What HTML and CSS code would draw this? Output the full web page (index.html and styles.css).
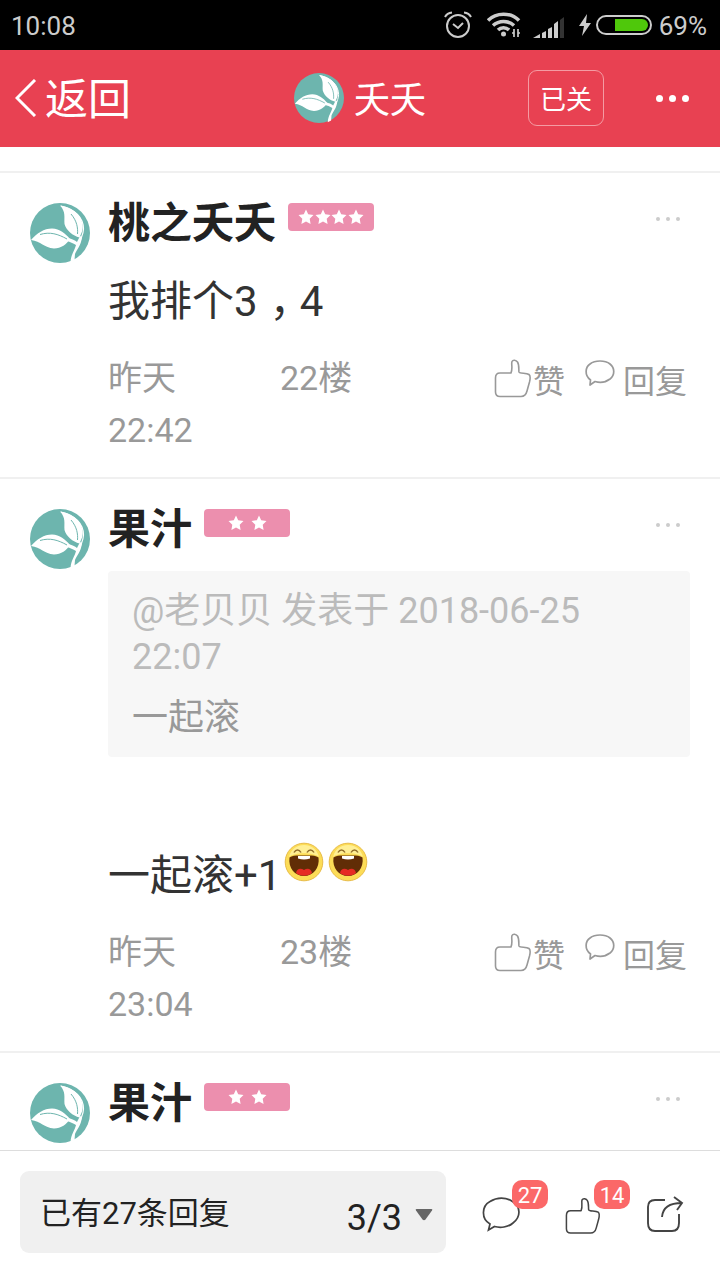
FILE: index.html
```html
<!DOCTYPE html>
<html lang="zh-CN">
<head>
<meta charset="utf-8">
<title>夭夭</title>
<link rel="stylesheet" href="styles.css">
</head>
<body>
<svg class="defs" aria-hidden="true">
  <symbol id="leaf" viewBox="0 0 60 60">
    <circle cx="30" cy="30" r="30" fill="#6db5ae"/>
    <g fill="#fff">
      <path d="M30 2.500C41 4 51 11 52.500 21C53.500 27 51 31 49.500 34.500C43 33 36 27 34.500 21C34 14 36 9 30 2.500Z"/>
      <path d="M1 37C7 30 14 25.500 22 25.500C30 26 35 30 40 36C37 41 31 45.500 24 45.500C14 45 11 38 1 37Z"/>
      <path d="M38 35C42 36 45 37 47 39C48 37 49 35 50 33L52 34C51 43 47 46 45 51L44.500 57L40.500 59C41 51 45 47 46 42C43 40 40 39 37 38Z"/>
    </g>
    <path d="M31 3C45 6 53.500 15 53.500 26C53.500 30 51.500 34 50.500 37" fill="none" stroke="#fff" stroke-width="1.200"/>
    <path d="M41 11C47 18 48 25 47.500 31M10 31.500C20 28.500 28 31 37 36" fill="none" stroke="#6db5ae" stroke-width="1"/>
  </symbol>
  <symbol id="thumb" viewBox="0 0 38 39">
    <path d="M17 14C19 9 17 5 18 2.500C19 .5 22 1 23.500 3C25.500 6 24.500 11 25 13C26 15 32 13.500 35 15.500C37 17 36 21 35.500 23L33 32C32 36 30 37.500 27 37.500H6C3 37.500 1.500 36 1.500 33V19C1.500 15 3 14 6 14Z" fill="none" stroke="currentColor" stroke-width="1.600" stroke-linejoin="round"/>
  </symbol>
  <symbol id="bubble" viewBox="0 0 30 27">
    <path d="M5.500 20C-1 15 .5 7 5 4C10 0 20 0 25 4C30 8 30 15 25 19C21 22 15 23 10 21.500L5 25Z" fill="none" stroke="currentColor" stroke-width="1.700" stroke-linejoin="round"/>
  </symbol>
  <symbol id="star" viewBox="0 0 16 16">
    <path d="M8 .5L10.200 5.200L15.500 6L11.700 9.700L12.600 15L8 12.500L3.400 15L4.300 9.700L.5 6L5.800 5.200Z" fill="#fff"/>
  </symbol>
  <symbol id="laugh" viewBox="0 0 40 40">
    <circle cx="20" cy="20" r="18.800" fill="#fcdc57" stroke="#e8bc48" stroke-width="1"/>
    <path d="M5 15C7 7 13 3 20 3S33 7 35 15C29 10 11 10 5 15Z" fill="#ffef94"/>
    <path d="M10 10.500C12 7 15 7 17 10.500M23 10.500C25 7 28 7 30 10.500" fill="none" stroke="#94702c" stroke-width="1.500"/>
    <path d="M5.500 15.500C9 13 14 13.500 20 13.500S31 13 34.500 15.500C36 26 29 34 20 34S4 26 5.500 15.500Z" fill="#612d06"/>
    <path d="M14 14H26V16.500Q20 18.500 14 16.500Z" fill="#fff"/>
    <path d="M12 31C13 26 17 26 20 28C23 26 27 26 28 31C24 34.500 16 34.500 12 31Z" fill="#e62a24"/>
  </symbol>
</svg>

<div class="screen">
  <div class="status">
    <span>10:08</span>
    <div class="status-icons">
      <svg width="28" height="28" viewBox="0 0 28 28" fill="none" stroke="#ccc" stroke-width="2"><circle cx="14" cy="15" r="11"/><path d="M9 13L14 17L19 12M1 6Q3 2 8 1.500M27 6Q25 2 20 1.500"/></svg>
      <svg class="wifi" width="34" height="26" viewBox="0 0 34 26" fill="none" stroke="#ccc" stroke-width="3.500"><path d="M1 8.500C9 0 24 0 32 8.500M6 13.500C12 8 21 8 27 13.500M11 18C14 15 19 15 22 18"/><circle cx="16.500" cy="22" r="2.500" fill="#ccc" stroke="none"/><path d="M27 17V25M31 17V25M25 21H27M31 21H33" stroke-width="1.700"/></svg>
      <svg class="signal" width="32" height="22" viewBox="0 0 32 22" fill="#ccc"><path d="M0 22L7 18V22ZM9 17L13 15V22H9ZM15 13L19 11V22H15ZM21 8L25 5V22H21Z"/><path d="M27 4L31 1V22H27Z" fill="#333"/></svg>
      <svg class="bolt" width="12" height="22" viewBox="0 0 12 22" fill="#ccc"><path d="M8 0L0 12H5L3 22L12 9H7Z"/></svg>
      <span class="battery"><i></i></span>
      <span>69%</span>
    </div>
  </div>

  <header class="topbar">
    <div class="back"><svg width="22" height="38" viewBox="0 0 22 38" fill="none" stroke="#fff" stroke-width="3"><path d="M20 1L2 19L20 37"/></svg><span>返回</span></div>
    <div class="title"><svg width="50" height="50"><use href="#leaf"/></svg><span>夭夭</span></div>
    <div class="follow">已关</div>
    <div class="menu"><i></i><i></i><i></i></div>
  </header>

  <main class="posts">
    <article class="post">
      <svg class="avatar"><use href="#leaf"/></svg>
      <div class="content">
        <div class="head"><b class="name">桃之夭夭</b><span class="level"><svg><use href="#star"/></svg><svg><use href="#star"/></svg><svg><use href="#star"/></svg><svg><use href="#star"/></svg></span><span class="more"><i></i><i></i><i></i></span></div>
        <p class="text">我排个3<span class="comma">，</span>4</p>
        <div class="meta"><span class="time">昨天 22:42</span><span class="floor">22楼</span><span class="like"><svg><use href="#thumb"/></svg>赞</span><span class="reply"><svg><use href="#bubble"/></svg>回复</span></div>
      </div>
    </article>
    <article class="post">
      <svg class="avatar"><use href="#leaf"/></svg>
      <div class="content">
        <div class="head"><b class="name">果汁</b><span class="level two"><svg><use href="#star"/></svg><svg><use href="#star"/></svg></span><span class="more"><i></i><i></i><i></i></span></div>
        <blockquote class="quote"><p class="source">@老贝贝 发表于 2018-06-25 22:07</p><p class="quoted">一起滚</p></blockquote>
        <p class="text after-quote">一起滚+1<span class="emoji"><svg><use href="#laugh"/></svg><svg><use href="#laugh"/></svg></span></p>
        <div class="meta"><span class="time">昨天 23:04</span><span class="floor">23楼</span><span class="like"><svg><use href="#thumb"/></svg>赞</span><span class="reply"><svg><use href="#bubble"/></svg>回复</span></div>
      </div>
    </article>
    <article class="post">
      <svg class="avatar"><use href="#leaf"/></svg>
      <div class="content">
        <div class="head"><b class="name">果汁</b><span class="level two"><svg><use href="#star"/></svg><svg><use href="#star"/></svg></span><span class="more"><i></i><i></i><i></i></span></div>
      </div>
    </article>
  </main>

  <footer class="bottombar">
    <div class="pager"><span class="total">已有27条回复</span><span class="page">3/3</span><svg class="caret" width="18" height="12" viewBox="0 0 18 12"><path d="M1.500 0H16.500Q18 0 17 1.500L10.500 10.500Q9 12 7.500 10.500L1 1.500Q0 0 1.500 0Z" fill="#666"/></svg></div>
    <div class="tool comments"><svg width="38" height="35" viewBox="0 0 38 35"><path d="M8 27C-1 22-.5 9 8 4.500C15 0 24 0 30.500 4.500C39 10 39 20 31 26C26 30.500 18 31 12.500 29.500L6.500 33Z" fill="none" stroke="currentColor" stroke-width="1.700"/></svg><span class="badge">27</span></div>
    <div class="tool likes"><svg width="36" height="38"><use href="#thumb"/></svg><span class="badge">14</span></div>
    <div class="tool share"><svg width="38" height="37" viewBox="0 0 38 37" fill="none" stroke="currentColor" stroke-width="1.900"><path d="M19 4H9Q2 4 2 11V27Q2 35 9 35H26Q33 35 33 27V18M16 21Q17 7 36 7M28 1L36 7L31 14"/></svg></div>
  </footer>
</div>
</body>
</html>
```
FILE: styles.css
```css
* { box-sizing: border-box; }
body, p, blockquote { margin: 0; }
body { background: #fff; font-family: Roboto, "Noto Sans CJK SC", sans-serif; }
svg { display: block; flex: none; }
.defs { position: absolute; width: 0; height: 0; }
.screen { display: flex; flex-direction: column; width: 720px; height: 1280px; overflow: hidden; }

.status { display: flex; justify-content: space-between; align-items: center; height: 50px; flex: none; padding: 2px 13px 0 11px; background: #000; color: #ccc; font-size: 26px; line-height: 48px; }
.status-icons { display: flex; align-items: center; }
.status-icons > svg:first-child { margin-top: -3px; }
.wifi { margin: -2px 0 0 15px; }
.signal { margin: 2px 0 0 12px; }
.bolt { margin: -2px 0 0 14px; }
.battery { width: 56px; height: 20px; margin: -2px 7px 0 5px; padding: 2px 2px 2px 17px; border: 2px solid #ccc; border-radius: 10px; }
.battery i { display: block; height: 12px; border-radius: 0 6px 6px 0; background: #4fc80b; }

.topbar { display: grid; grid-template-columns: 294px 234px 76px 1fr; align-items: center; height: 97px; flex: none; padding-bottom: 1px; background: #e84152; color: #fff; }
.back { display: flex; align-items: center; gap: 8px; padding-left: 15px; font-size: 43px; line-height: 60px; }
.back svg { margin-top: -1px; }
.back span { padding-top: 4px; }
.title { display: flex; align-items: center; gap: 10px; height: 50px; font-size: 36px; line-height: 50px; }
.title span { padding-top: 5px; }
.follow { height: 56px; border: 1px solid #f49ba3; border-radius: 9px; font-size: 26px; line-height: 58px; text-align: center; }
.menu { display: flex; gap: 6px; padding-left: 52px; }
.menu i { width: 7px; height: 7px; border-radius: 50%; background: #fff; }

.posts { flex: none; height: 1003px; padding-top: 24px; overflow: hidden; }
.post { display: flex; gap: 18px; padding: 30px 30px 21px; border-top: 2px solid #f0f0f0; }
.avatar { width: 60px; height: 60px; }
.content { flex: 1; min-width: 0; }
.head { display: flex; height: 38px; }
.name { padding-top: 2px; font-size: 42px; line-height: 38px; color: #222; }
.level { display: flex; justify-content: center; align-items: center; gap: 0.500px; width: 86px; height: 28px; margin-left: 12px; border-radius: 4px; background: #ec8fae; }
.level svg { width: 16px; height: 16px; }
.level.two { gap: 7px; }
.more { display: flex; gap: 6px; margin: 14px 10px 0 auto; }
.more i { width: 4px; height: 4px; border-radius: 50%; background: #ccc; }
.text { display: flex; margin-top: 32px; font-size: 42px; line-height: 58px; color: #333; }
.comma { padding: 0 9px 0 12px; font-feature-settings: "halt"; }
.after-quote { margin-top: 90px; }
.emoji { display: flex; gap: 4px; padding: 0 0 0 3px; margin-top: -5px; }
.emoji svg { width: 40px; height: 40px; }
.meta { display: flex; margin-top: 21px; height: 104px; font-size: 34px; line-height: 52px; color: #999; }
.time { width: 120px; margin-right: 52px; }
.floor { width: 214px; }
.like, .reply { display: flex; padding-top: 4px; font-size: 32px; }
.like svg { width: 38px; height: 39px; margin: 3px 1px 0 0; }
.reply { margin-left: 20px; }
.reply svg { width: 30px; height: 27px; margin: 4px 8px 0 0; }
.quote { margin-top: 24px; padding: 17px 24px; border-radius: 4px; background: #f7f7f7; font-size: 36px; line-height: 46px; }
.source { color: #bbb; }
.quoted { padding-top: 15px; height: 60px; color: #999; }

.bottombar { display: flex; align-items: flex-start; height: 130px; flex: none; padding: 20px 20px 0; border-top: 1px solid #ddd; background: #fff; }
.pager { display: flex; align-items: center; width: 426px; height: 82px; padding: 0 13px 0 20px; border-radius: 9px; background: #f0f0f0; font-size: 31px; color: #222; }
.total { margin-top: -3px; }
.page { margin: 12px 13px 0 auto; font-size: 36px; line-height: 44px; }
.caret { margin-top: 5px; }
.tool { position: relative; color: #444; }
.comments { margin: 26px 0 0 36px; }
.likes { margin: 26px 0 0 45px; }
.share { margin: 25px 0 0 45px; }
.badge { position: absolute; left: 30px; top: -17px; width: 36px; height: 29px; border-radius: 10px; background: #fb6868; color: #fff; font-size: 22px; line-height: 31px; text-align: center; }
.likes .badge { left: 29px; }
```
